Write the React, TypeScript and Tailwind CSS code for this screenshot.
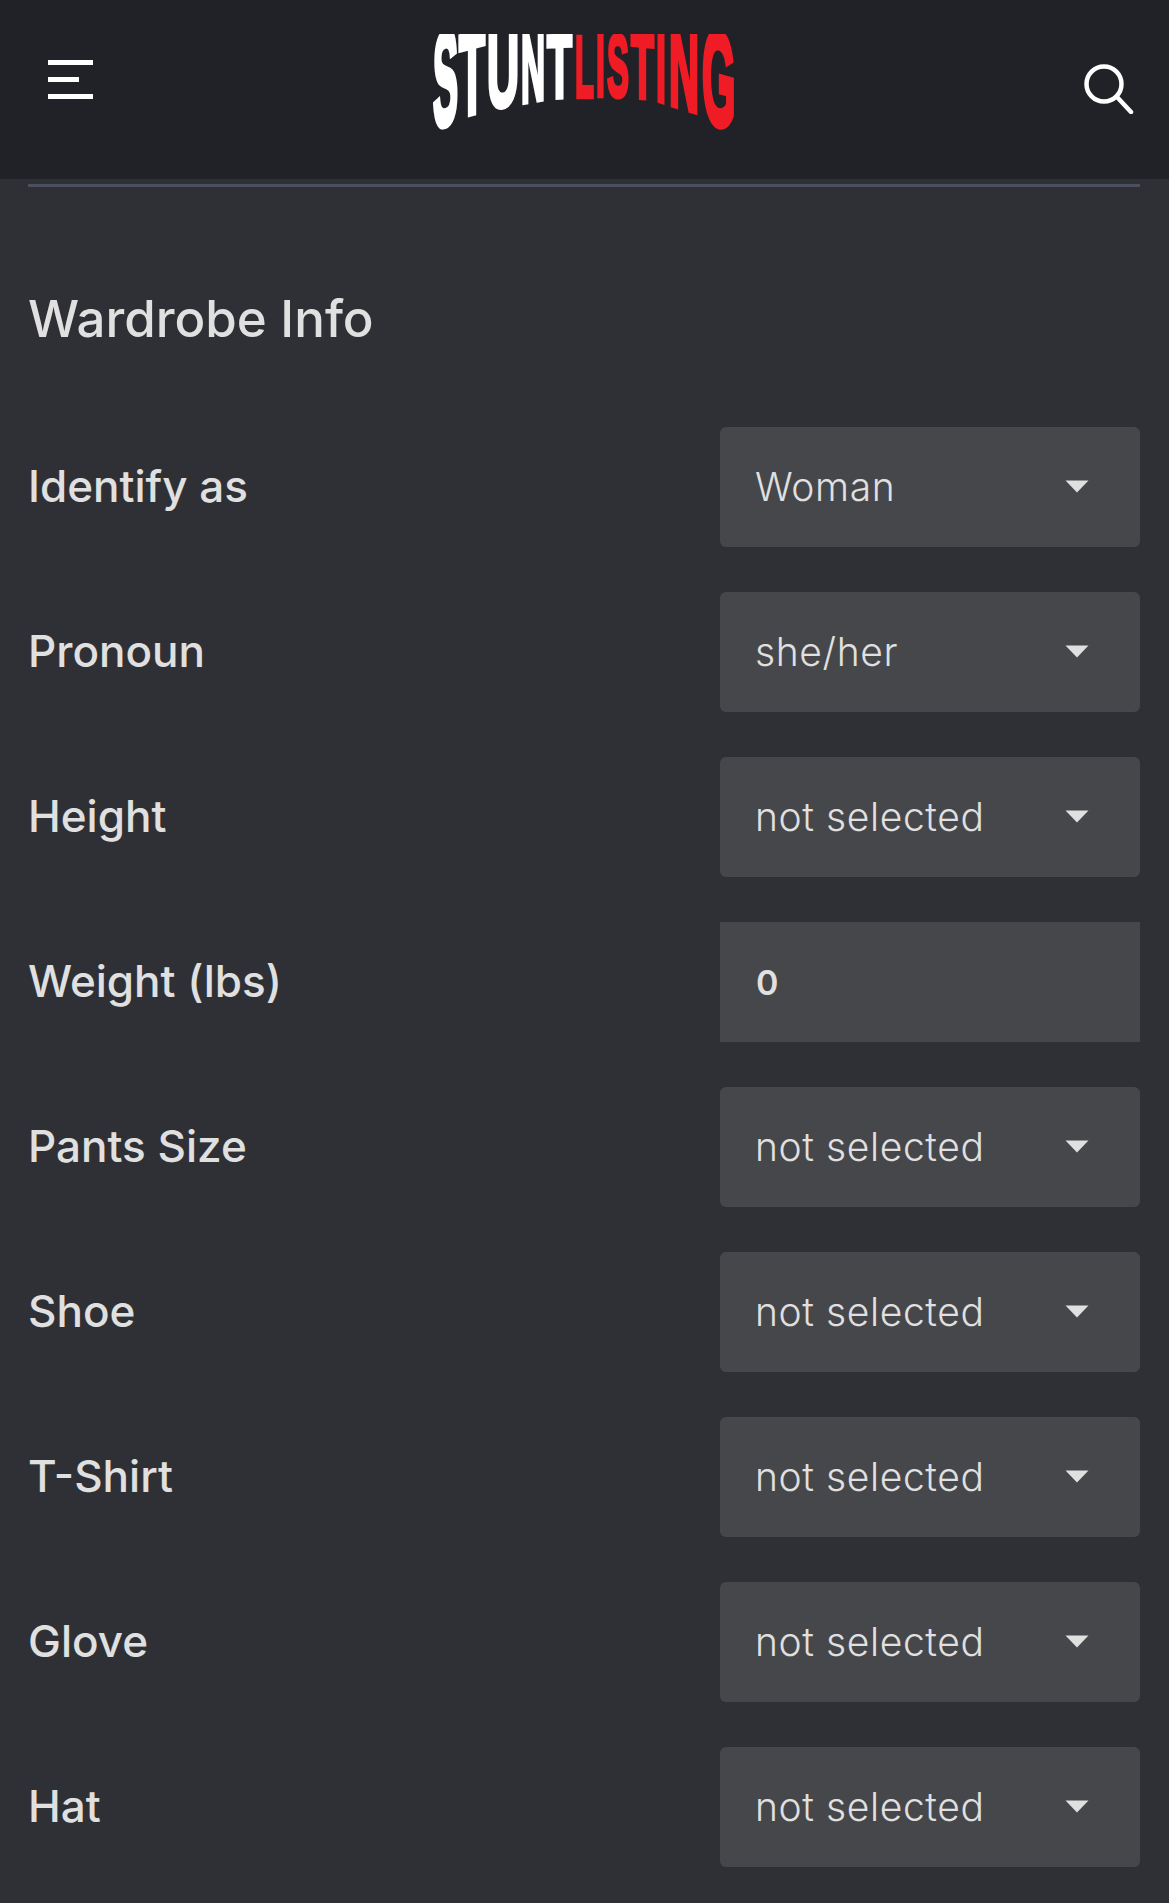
const rows: { label: string; value: string; input?: boolean }[] = [
  { label: "Identify as", value: "Woman" },
  { label: "Pronoun", value: "she/her" },
  { label: "Height", value: "not selected" },
  { label: "Weight (lbs)", value: "0", input: true },
  { label: "Pants Size", value: "not selected" },
  { label: "Shoe", value: "not selected" },
  { label: "T-Shirt", value: "not selected" },
  { label: "Glove", value: "not selected" },
  { label: "Hat", value: "not selected" },
];

// [char, left, right, bottomLeft, bottomRight, colour]
const letters: [string, number, number, number, number, string][] = [
  ["S", 434, 459, 129, 120, "#ffffff"],
  ["T", 460, 486, 117, 110, "#ffffff"],
  ["U", 488, 520, 109, 103, "#ffffff"],
  ["N", 522, 546, 103, 99, "#ffffff"],
  ["T", 548, 573, 98, 97, "#ffffff"],
  ["L", 576, 595, 97, 97, "#f01c25"],
  ["I", 597, 606, 96, 96, "#f01c25"],
  ["S", 608, 630, 96, 97, "#f01c25"],
  ["T", 632, 655, 97, 99, "#f01c25"],
  ["I", 657, 667, 100, 103, "#f01c25"],
  ["N", 670, 700, 104, 113, "#f01c25"],
  ["G", 703, 734, 120, 129, "#f01c25"],
];

function Logo() {
  return (
    <svg width="300" height="97" viewBox="434 33 300 97" className="block overflow-visible">
      <g fontFamily="'Liberation Sans', sans-serif" fontWeight="700" fontSize="100">
        {letters.map(([c, l, r, bl, br, fill], i) => {
          const w = r - l;
          const glyph = c === "I" ? 27.8 : c === "T" ? 61 : c === "L" ? 61 : c === "G" || c === "U" || c === "N" ? 72 : 66.7;
          const sx = w / glyph;
          const sy = (Math.max(bl, br) - 34) / 71.6;
          const skew = (br - bl) / w;
          return (
            <text
              key={i}
              x="0"
              y="0"
              fill={fill}
              stroke={fill}
              strokeWidth="5"
              strokeLinejoin="miter"
              transform={`matrix(${sx} ${skew * sx} 0 ${sy} ${l} ${bl})`}
            >
              {c}
            </text>
          );
        })}
      </g>
      <rect x="430" y="15" width="310" height="19" fill="#212227" />
    </svg>
  );
}

export default function App() {
  return (
    <div className="min-h-[1903px] bg-[#2f3035] font-['Inter','Liberation_Sans',sans-serif] text-[#e0e0e0]">
      <header className="flex h-[179px] items-start justify-between bg-[#212227] pl-[48px] pr-[34px]">
        <div className="mt-[60px] flex w-[45px] flex-col gap-[12px]">
          <div className="h-[5px] w-[45px] bg-white" />
          <div className="h-[5px] w-[31px] bg-white" />
          <div className="h-[5px] w-[45px] bg-white" />
        </div>
        <div className="ml-[-10px] mt-[33px]">
          <Logo />
        </div>
        <svg className="mt-[62px]" width="52" height="52" viewBox="0 0 52 52" fill="none" stroke="#ffffff" strokeWidth="4.5" strokeLinecap="round">
          <circle cx="21" cy="22" r="17.5" />
          <path d="M34 35 L48 50" />
        </svg>
      </header>
      <div className="ml-[28px] mr-[29px] mt-[5px] h-[3px] bg-[#4a5060]" />
      <h2 className="ml-[28px] mt-[103px] text-[51px] font-medium leading-[58px] text-[#e0e0e0]">Wardrobe Info</h2>
      <div className="mt-[79px] flex flex-col gap-[45px] pl-[28px] pr-[29px]">
        {rows.map((row) => (
          <div key={row.label} className="flex h-[120px] items-center justify-between">
            <span className="pb-[2px] text-[44px] font-medium leading-[56px] text-[#e0e0e0]">{row.label}</span>
            {row.input ? (
              <div className="flex h-[120px] w-[420px] items-center bg-[#46474b] pl-[36px] text-[34px] font-semibold">
                {row.value}
              </div>
            ) : (
              <div className="flex h-[120px] w-[420px] items-center justify-between rounded-[6px] bg-[#46474b] pl-[35px] pr-[51px] text-[39px] font-light tracking-[0.6px]">
                <span>{row.value}</span>
                <svg width="24" height="13" viewBox="0 0 24 13" className="mb-[1px]">
                  <path d="M0.5 0.5 H23.5 L12 12.5 Z" fill="#e0e0e0" />
                </svg>
              </div>
            )}
          </div>
        ))}
      </div>
    </div>
  );
}
